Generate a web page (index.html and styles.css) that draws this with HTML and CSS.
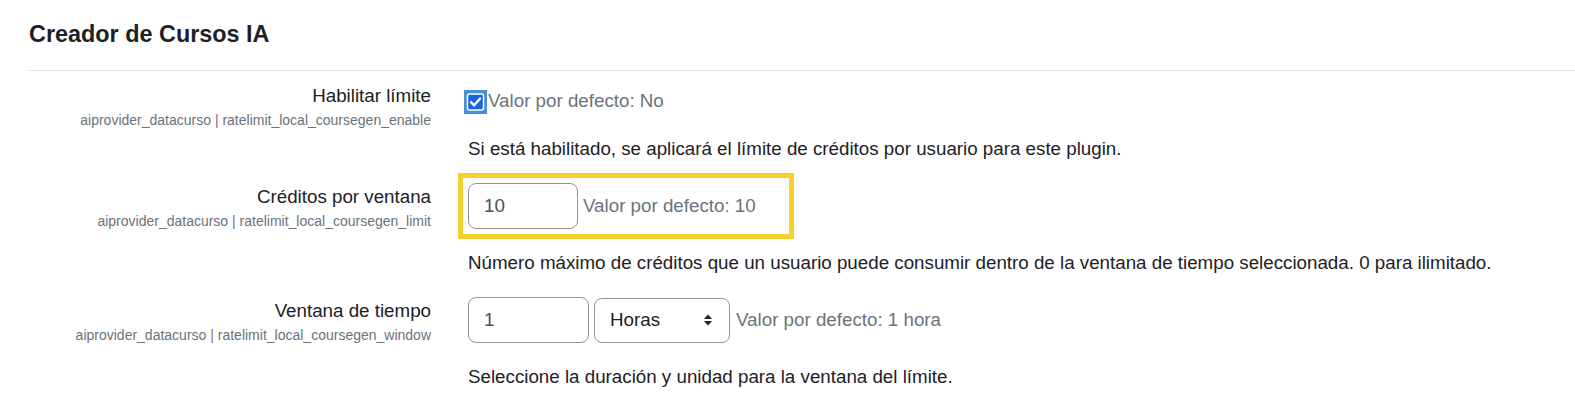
FILE: index.html
```html
<!DOCTYPE html>
<html lang="es">
<head>
<meta charset="utf-8">
<title>Creador de Cursos IA</title>
<link rel="stylesheet" href="styles.css">
</head>
<body>
<div class="page">
  <h3 class="heading">Creador de Cursos IA</h3>
  <div class="settings">
    <div class="item">
      <div class="label-col">
        <div class="label">Habilitar límite</div>
        <div class="key">aiprovider_datacurso | ratelimit_local_coursegen_enable</div>
      </div>
      <div class="control-col">
        <div class="setting setting-check">
          <span class="check-sel">
            <svg width="23" height="24" viewBox="0 0 23 24">
              <rect x="0" y="0" width="23" height="24" fill="#4b8edb"/>
              <rect x="3.5" y="4" width="16" height="16" rx="2" fill="#1565e0" stroke="#ffffff" stroke-width="1.5"/>
              <path d="M7 12.2 L10.2 15.3 L16 8.6" fill="none" stroke="#ffffff" stroke-width="2.4" stroke-linecap="round" stroke-linejoin="round"/>
            </svg>
          </span>
          <span class="default">Valor por defecto: No</span>
        </div>
        <div class="desc">Si está habilitado, se aplicará el límite de créditos por usuario para este plugin.</div>
      </div>
    </div>

    <div class="item">
      <div class="label-col">
        <div class="label">Créditos por ventana</div>
        <div class="key">aiprovider_datacurso | ratelimit_local_coursegen_limit</div>
      </div>
      <div class="control-col">
        <div class="setting highlight">
          <div class="input w110">10</div>
          <span class="default">Valor por defecto: 10</span>
        </div>
        <div class="desc">Número máximo de créditos que un usuario puede consumir dentro de la ventana de tiempo seleccionada. 0 para ilimitado.</div>
      </div>
    </div>

    <div class="item">
      <div class="label-col">
        <div class="label">Ventana de tiempo</div>
        <div class="key">aiprovider_datacurso | ratelimit_local_coursegen_window</div>
      </div>
      <div class="control-col">
        <div class="setting">
          <div class="input w120">1</div>
          <div class="select">
            <span>Horas</span>
            <svg width="10" height="14" viewBox="0 0 10 14">
              <path d="M1 6 L5 1.5 L9 6 Z" fill="#1d2125"/>
              <path d="M1 8 L5 12.5 L9 8 Z" fill="#1d2125"/>
            </svg>
          </div>
          <span class="default">Valor por defecto: 1 hora</span>
        </div>
        <div class="desc">Seleccione la duración y unidad para la ventana del límite.</div>
      </div>
    </div>
  </div>
</div>
</body>
</html>
```

FILE: styles.css
```css
html, body {
  margin: 0;
  padding: 0;
  background: #ffffff;
}

body {
  font-family: "Liberation Sans", Arial, Helvetica, sans-serif;
  color: #1d2125;
  font-size: 18.75px;
  line-height: 1.5;
}

.page {
  padding-left: 29px;
}

.heading {
  margin: 0;
  padding-top: 20px;
  font-size: 23.4px;
  line-height: 28px;
  font-weight: bold;
  color: #1d2125;
}

.settings {
  margin-top: 22px;
  border-top: 1px solid #dee2e6;
  padding-top: 11px;
}

.item {
  display: grid;
  grid-template-columns: 402px 1fr;
  column-gap: 37px;
  margin-bottom: 20px;
}

.label-col {
  text-align: right;
}

.label {
  font-size: 18.75px;
  line-height: 28px;
  color: #1d2125;
}

.key {
  font-size: 14px;
  line-height: 21px;
  color: #6a737b;
}

.setting {
  display: flex;
  align-items: center;
}

.setting-check {
  padding-top: 5px;
  height: 28px;
}

.check-sel {
  display: flex;
  margin-left: -4px;
  margin-top: 1px;
}

.check-sel svg {
  display: block;
}

.default {
  color: #6a737b;
  font-size: 18.75px;
  line-height: 28px;
}

.setting-check .default {
  margin-left: 1px;
}

.input {
  box-sizing: border-box;
  height: 46px;
  border: 1px solid #8f959e;
  border-radius: 8px;
  padding: 0 15px;
  display: flex;
  align-items: center;
  color: #495057;
  font-size: 18.75px;
  margin-right: 5px;
}

.w110 {
  width: 110px;
}

.w120 {
  width: 121px;
}

.select {
  box-sizing: border-box;
  width: 136px;
  height: 45px;
  border: 1px solid #8f959e;
  border-radius: 8px;
  padding: 0 15px;
  display: flex;
  align-items: center;
  justify-content: space-between;
  color: #1d2125;
  margin-right: 6px;
}

.select svg {
  display: block;
  margin-right: 1px;
}

.highlight {
  position: relative;
  width: 316px;
}

.highlight::after {
  content: "";
  position: absolute;
  left: -10px;
  top: -10px;
  bottom: -10px;
  width: 326px;
  border: 5.5px solid #f6d12c;
  pointer-events: none;
}

.desc {
  margin-top: 20px;
  font-size: 18.75px;
  line-height: 28px;
  color: #1d2125;
}
```
